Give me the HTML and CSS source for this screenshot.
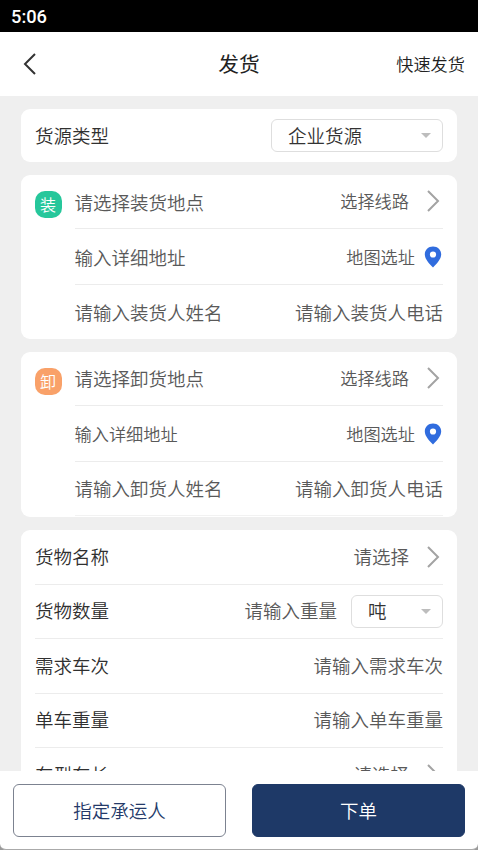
FILE: index.html
```html
<!DOCTYPE html>
<html lang="zh-CN">
<head>
<meta charset="utf-8">
<title>发货</title>
<link rel="stylesheet" href="styles.css">
</head>
<body>
<svg class="defs" width="0" height="0">
  <symbol id="chevron" viewBox="0 0 14 24"><path d="M2 2 12 12 2 22" fill="none" stroke="#a3a3a3" stroke-width="2"/></symbol>
  <symbol id="pin" viewBox="0 0 18 22"><path fill="#306cde" fill-rule="evenodd" d="M9 .5C4.200.5.8 4 .8 8.300c0 5 4.400 9.400 8.200 13.200 3.800-3.800 8.200-8.200 8.200-13.200C17.200 4 13.800.5 9 .5Zm0 4.900a3.100 3.100 0 1 1 0 6.200 3.100 3.100 0 0 1 0-6.200Z"/></symbol>
</svg>
<div class="screen">
  <div class="status">5:06</div>
  <header class="header">
    <svg class="back" viewBox="0 0 14 24"><path d="M12 2 2 12 12 22" fill="none" stroke="#333" stroke-width="2"/></svg>
    <h1 class="title">发货</h1>
    <span class="quick">快速发货</span>
  </header>
  <main class="content">
    <section class="card type-card">
      <span class="label">货源类型</span>
      <div class="select source"><span>企业货源</span><i class="caret"></i></div>
    </section>
    <section class="card place-card load">
      <span class="badge green">装</span>
      <div class="rows">
        <div class="row first"><span>请选择装货地点</span><span class="small route">选择线路</span><svg class="chevron"><use href="#chevron"/></svg></div>
        <div class="row second"><span>输入详细地址</span><span class="small map">地图选址</span><svg class="pin"><use href="#pin"/></svg></div>
        <div class="row third"><span>请输入装货人姓名</span><span class="phone">请输入装货人电话</span></div>
      </div>
    </section>
    <section class="card place-card unload">
      <span class="badge orange">卸</span>
      <div class="rows">
        <div class="row first"><span>请选择卸货地点</span><span class="small route">选择线路</span><svg class="chevron"><use href="#chevron"/></svg></div>
        <div class="row second"><span class="small">输入详细地址</span><span class="small map">地图选址</span><svg class="pin"><use href="#pin"/></svg></div>
        <div class="row third"><span>请输入卸货人姓名</span><span class="phone">请输入卸货人电话</span></div>
      </div>
    </section>
    <section class="card goods-card">
      <div class="item"><span class="label">货物名称</span><span class="value">请选择</span><svg class="chevron"><use href="#chevron"/></svg></div>
      <div class="item"><span class="label">货物数量</span><span class="value">请输入重量</span><div class="select unit"><span>吨</span><i class="caret"></i></div></div>
      <div class="item"><span class="label">需求车次</span><span class="value">请输入需求车次</span></div>
      <div class="item"><span class="label">单车重量</span><span class="value">请输入单车重量</span></div>
      <div class="item"><span class="label">车型车长</span><span class="value">请选择</span><svg class="chevron"><use href="#chevron"/></svg></div>
    </section>
  </main>
  <footer class="footer">
    <div class="button outline">指定承运人</div>
    <div class="button primary">下单</div>
  </footer>
</div>
</body>
</html>
```
FILE: styles.css
```css
* { box-sizing: border-box; }
body { margin: 0; background: #999; }
.defs { display: block; }
.screen {
  display: flex;
  flex-direction: column;
  width: 478px;
  height: 850px;
  overflow: hidden;
  font-family: "Noto Sans CJK SC", sans-serif;
  font-size: 18.5px;
  font-weight: 350;
  line-height: 28px;
  color: #595959;
  white-space: nowrap;
}
.status {
  flex: none;
  height: 32px;
  padding: 3px 11px 0;
  background: #000;
  color: #fff;
  font-family: Roboto, sans-serif;
  font-size: 18.3px;
  font-weight: 500;
}
.header {
  flex: none;
  display: grid;
  grid-template-columns: 1fr auto 1fr;
  align-items: center;
  height: 64px;
  padding: 0 13px 0 23px;
  background: #fff;
  color: #222;
}
.back { width: 14px; height: 24px; }
.title { margin: -2px 0 0 -10px; font-size: 20.7px; font-weight: 400; }
.quick { justify-self: end; font-size: 17.2px; }
.content {
  flex: 1;
  min-height: 0;
  overflow: hidden;
  padding: 13px 21px 0;
  background: #efefef;
}
.card { background: #fff; border-radius: 9px; }
.label { color: #303030; }
.type-card {
  display: flex;
  align-items: center;
  justify-content: space-between;
  height: 53px;
  padding: 0 14px;
}
.select {
  display: flex;
  align-items: center;
  justify-content: space-between;
  height: 33px;
  padding: 0 11px 0 16px;
  border: 1px solid #dedede;
  border-radius: 6px;
  color: #333;
}
.source { width: 172px; }
.unit { width: 92px; margin-left: 14px; }
.caret {
  border: 5px solid transparent;
  border-top: 5px solid #bdbdbd;
  border-bottom: 0;
}
.place-card { display: flex; padding: 0 14px; }
.load { height: 164px; margin-top: 13px; }
.unload { height: 165px; margin-top: 13px; }
.badge {
  flex: none;
  width: 27px;
  height: 27px;
  margin: 16px 13px 0 -0.500px;
  border-radius: 10px;
  color: #fff;
  font-size: 16px;
  line-height: 27px;
  text-align: center;
}
.green { background: #26c79b; }
.orange { background: #f9a169; }
.rows { flex: 1; }
.row { display: flex; align-items: center; border-bottom: 1px solid #ececec; }
.first { height: 54px; }
.second { height: 56px; }
.third { height: 54px; border-color: transparent; }
.unload .third { border-color: #f2f2f2; }
.small { font-size: 17.2px; }
.route, .map, .phone { margin-left: auto; }
.chevron { flex: none; width: 14px; height: 24px; margin: 0 3px 0 17px; }
.first .chevron { margin-bottom: 2px; }
.route { margin-bottom: 2px; }
.type-card span, .item span, .unload .first > span:first-child, .unload .third span { margin-bottom: 2px; }
.pin { width: 18px; height: 22px; margin: 0 1px 0 9px; }
.goods-card { margin-top: 13px; padding: 0 14px; }
.item {
  display: flex;
  align-items: center;
  height: 54.5px;
  border-bottom: 1px solid #ececec;
}
.value { margin-left: auto; }
.footer {
  flex: none;
  display: flex;
  justify-content: space-between;
  height: 79px;
  padding: 13px 13px 0;
  background: #fff;
  border-bottom: 1px solid #aaa;
  border-radius: 0 0 6px 6px;
}
.button {
  width: 213px;
  height: 53px;
  border: 1px solid #7c8290;
  border-radius: 6px;
  color: #253a69;
  line-height: 50px;
  text-align: center;
}
.primary { border-color: #1e3967; background: #1e3967; color: #fff; }
```
